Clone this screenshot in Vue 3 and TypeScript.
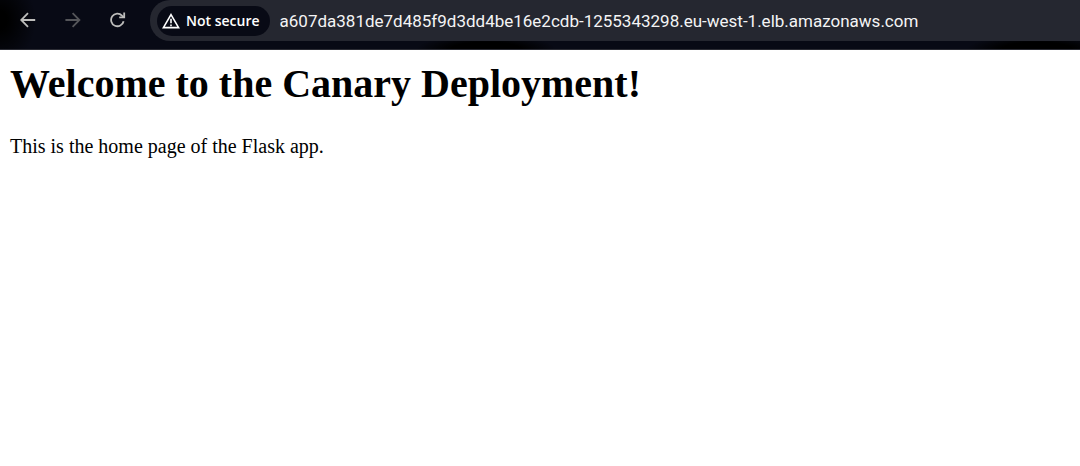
<script setup lang="ts">
import { ref } from 'vue'

const address = ref('a607da381de7d485f9d3dd4be16e2cdb-1255343298.eu-west-1.elb.amazonaws.com')
</script>

<template>
  <div class="browser">
    <header class="toolbar">
      <nav class="nav" aria-label="Browser navigation">
        <button type="button" class="nav-button" aria-label="Back">
          <svg viewBox="0 0 16 16" width="16" height="16" aria-hidden="true">
            <path d="M15.2 8H1.6M8 1.2 1.2 8 8 14.8" />
          </svg>
        </button>
        <button type="button" class="nav-button dim" aria-label="Forward">
          <svg viewBox="0 0 16 16" width="16" height="16" aria-hidden="true">
            <path d="M.4 8H14M7.6 1.2 14.4 8 7.6 14.8" />
          </svg>
        </button>
        <button type="button" class="nav-button" aria-label="Reload">
          <svg viewBox="0 0 16 16" width="16" height="16" aria-hidden="true">
            <path d="M13.6 9.2A6.3 6.3 0 1 1 12 3.6L13.6 5" />
            <path d="M14.2 .4V5.4H9.2" />
          </svg>
        </button>
      </nav>
      <div class="address-bar">
        <button type="button" class="security">
          <svg viewBox="0 0 18 16" width="18" height="16" aria-hidden="true">
            <path d="M9 1.6 16.6 14.6H1.4Z" />
            <path d="M9 5.8v4.4M9 11.4v1.8" />
          </svg>
          <span>Not secure</span>
        </button>
        <input v-model="address" class="url" type="text" aria-label="Address" spellcheck="false" />
      </div>
    </header>
    <main class="page">
      <h1>Welcome to the Canary Deployment!</h1>
      <p>This is the home page of the Flask app.</p>
    </main>
  </div>
</template>

<style>
body {
  margin: 0;
  background: #fff;
}
</style>

<style scoped>
.browser {
  min-height: 100vh;
  background: #fff;
}

.toolbar {
  display: flex;
  align-items: flex-start;
  box-sizing: border-box;
  height: 50px;
  padding-bottom: 8px;
  border-bottom: 1px solid #2b2c34;
  background:
    radial-gradient(ellipse 36px 46px at 0 20px, #000 20%, transparent),
    radial-gradient(ellipse 70px 14px at 45% 100%, #000 50%, transparent),
    radial-gradient(ellipse 70px 14px at 96% 100%, #000 50%, transparent),
    #080a15;
}

.nav {
  display: flex;
  gap: 13px;
  padding: 4px 16px 0 12px;
}

.nav-button {
  display: grid;
  place-items: center;
  width: 32px;
  height: 32px;
  padding: 0;
  border: 0;
  background: transparent;
  color: #bdbdbb;
}

.nav-button.dim {
  color: #55565a;
}

svg {
  flex: none;
  fill: none;
  stroke: currentColor;
  stroke-width: 1.8;
}

.address-bar {
  display: flex;
  flex: 1;
  align-items: center;
  gap: 10px;
  min-width: 0;
  box-sizing: border-box;
  height: 41px;
  padding-left: 7px;
  border-radius: 20px 0 0 20px;
  background: #252730;
}

.security {
  display: flex;
  flex: none;
  align-items: center;
  gap: 6px;
  height: 30px;
  padding: 0 10px 0 5px;
  border: 0;
  border-radius: 15px;
  background: #080a15;
  color: #fff;
  font: 600 14px/20px "Open Sans", "Noto Sans", sans-serif;
  white-space: nowrap;
}

.security svg {
  stroke-width: 1.6;
}

.url {
  flex: 1;
  min-width: 0;
  height: 32px;
  padding: 0;
  border: 0;
  outline: 0;
  background: transparent;
  color: #f4f4f5;
  font: 17px/24px Roboto, sans-serif;
}

.page {
  padding: 11px 10px;
  color: #000;
  font-family: "Liberation Serif", "Times New Roman", serif;
}

h1 {
  margin: 0 0 28px;
  font-size: 40px;
  line-height: 46px;
}

p {
  margin: 0;
  font-size: 20px;
  line-height: 23px;
}
</style>
